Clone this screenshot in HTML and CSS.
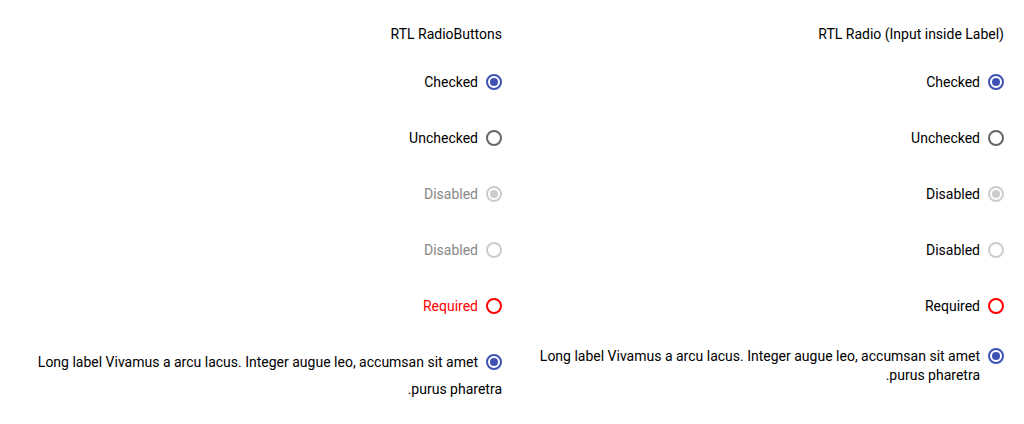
FILE: index.html
```html
<!DOCTYPE html>
<html>
<head>
<meta charset="utf-8">
<link rel="stylesheet" href="styles.css">
</head>
<body>
<div class="page">
  <section class="col">
    <div class="title">RTL RadioButtons</div>
    <div class="row"><span class="radio checked"></span><span class="lbl">Checked</span></div>
    <div class="row"><span class="radio"></span><span class="lbl">Unchecked</span></div>
    <div class="row dis"><span class="radio checked disabled"></span><span class="lbl">Disabled</span></div>
    <div class="row dis"><span class="radio disabled"></span><span class="lbl">Disabled</span></div>
    <div class="row req"><span class="radio required"></span><span class="lbl">Required</span></div>
    <div class="row long"><span class="radio checked"></span><span class="lbl">Long label Vivamus a arcu lacus. Integer augue leo, accumsan sit amet purus pharetra.</span></div>
  </section>
  <section class="col">
    <div class="title">RTL Radio (Input inside Label)</div>
    <label class="frow"><span class="radio checked"></span><span class="ftxt">Checked</span></label>
    <label class="frow"><span class="radio"></span><span class="ftxt">Unchecked</span></label>
    <label class="frow"><span class="radio checked disabled"></span><span class="ftxt">Disabled</span></label>
    <label class="frow"><span class="radio disabled"></span><span class="ftxt">Disabled</span></label>
    <label class="frow"><span class="radio required"></span><span class="ftxt">Required</span></label>
    <label class="frow flong"><span class="radio checked"></span><span class="ftxt">Long label Vivamus a arcu lacus. Integer augue leo, accumsan sit amet purus pharetra.</span></label>
  </section>
</div>
</body>
</html>
```
FILE: styles.css
```css
html, body {
  margin: 0;
  background: #fff;
}
body {
  padding: 8px;
  font-family: Roboto, "Liberation Sans", sans-serif;
  font-size: 14px;
  color: #000;
}
.page {
  display: grid;
  grid-template-columns: 1fr 1fr;
  margin-right: 4px;
}
.col {
  direction: rtl;
  padding: 16px 8px 0 0;
}
.title {
  line-height: 20px;
  height: 20px;
  margin-bottom: 10px;
}
.row {
  line-height: 27px;
  padding: 15px 0 14px;
}
.row .radio {
  vertical-align: -3px;
  margin-left: 8px;
}
.row.dis .lbl { color: #888; }
.row.req .lbl { color: #f00; }
.radio {
  display: inline-block;
  box-sizing: border-box;
  width: 16px;
  height: 16px;
  border: 2px solid #666;
  border-radius: 50%;
  position: relative;
  flex: none;
}
.radio.checked { border-color: #3f51b5; }
.radio.checked::after {
  content: "";
  position: absolute;
  left: 2px;
  top: 2px;
  width: 8px;
  height: 8px;
  border-radius: 50%;
  background: #3f51b5;
}
.radio.disabled { border-color: #ccc; }
.radio.disabled::after { background: #ccc; }
.radio.required { border-color: #f00; }
.frow {
  display: flex;
  align-items: center;
  gap: 8px;
  height: 56px;
  line-height: 19px;
}
.frow.flong {
  align-items: flex-start;
  padding-top: 13px;
  box-sizing: border-box;
}
.frow.flong .radio { margin-top: 1px; }
```
